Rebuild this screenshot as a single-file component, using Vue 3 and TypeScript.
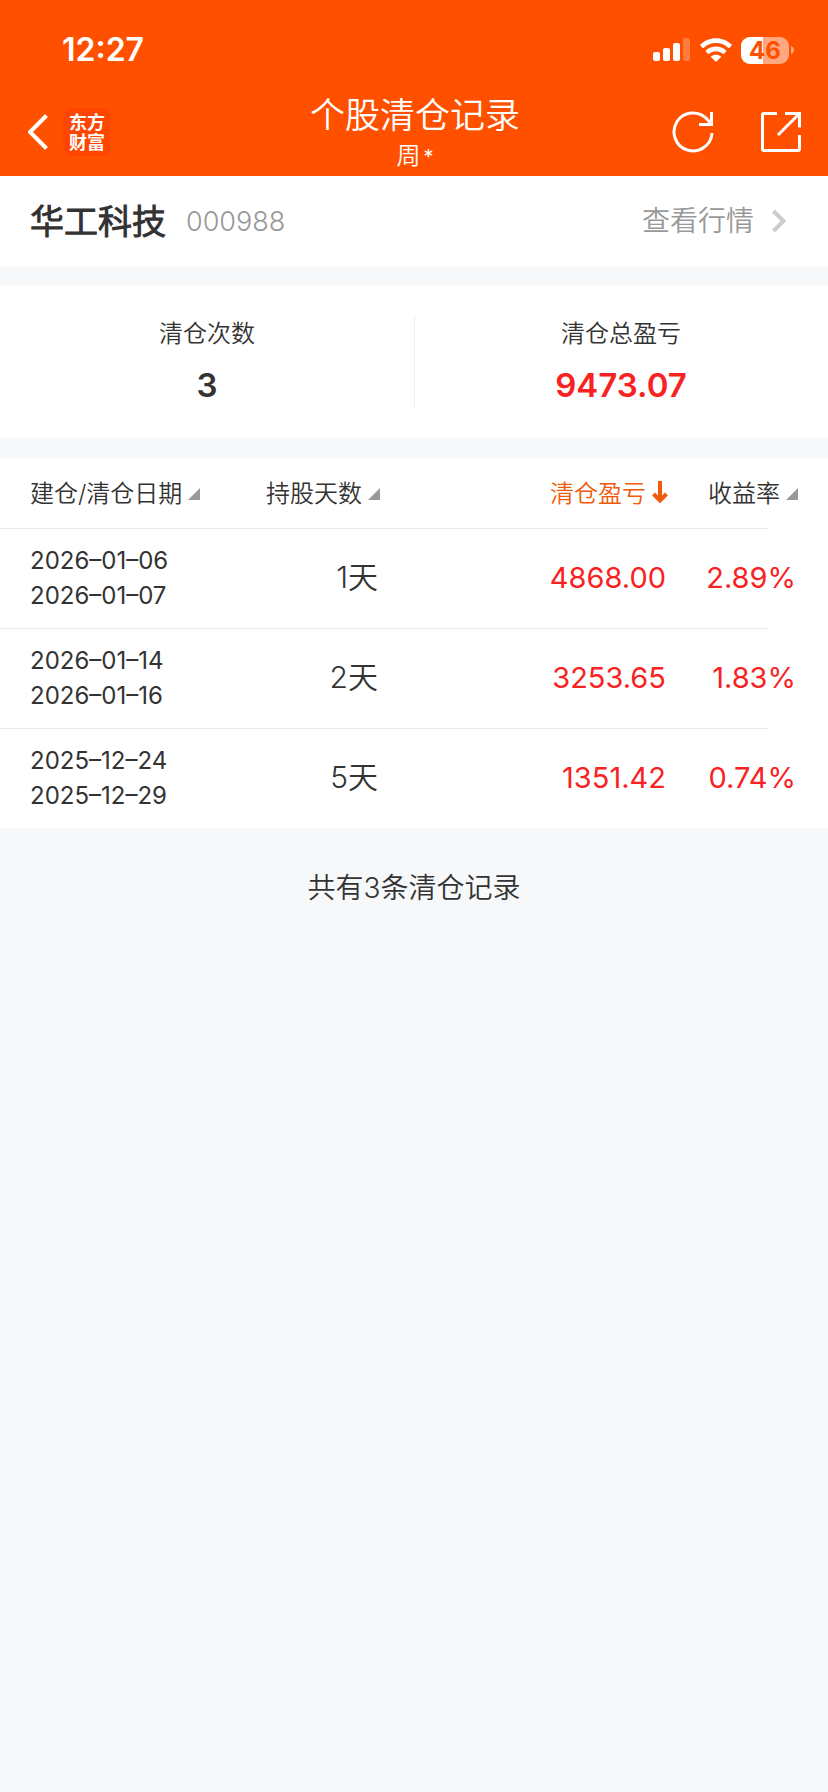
<script setup lang="ts">
interface ClearRecord {
  opened: string
  closed: string
  days: number
  profit: string
  rate: string
}

interface Column {
  key: string
  label: string
  active?: boolean
}

const battery = 46

const columns: Column[] = [
  { key: 'date', label: '建仓/清仓日期' },
  { key: 'days', label: '持股天数' },
  { key: 'profit', label: '清仓盈亏', active: true },
  { key: 'rate', label: '收益率' },
]

const records: ClearRecord[] = [
  { opened: '2026–01–06', closed: '2026–01–07', days: 1, profit: '4868.00', rate: '2.89%' },
  { opened: '2026–01–14', closed: '2026–01–16', days: 2, profit: '3253.65', rate: '1.83%' },
  { opened: '2025–12–24', closed: '2025–12–29', days: 5, profit: '1351.42', rate: '0.74%' },
]
</script>

<template>
  <div class="page">
    <header class="top">
      <div class="status">
        <span class="time">12:27</span>
        <div class="indicators">
          <svg class="signal" viewBox="0 0 38 24" aria-hidden="true">
            <rect x="0" y="14" width="7" height="9" rx="2" />
            <rect x="10" y="10" width="7" height="13" rx="2" />
            <rect x="20" y="5" width="7" height="18" rx="2" />
            <rect x="30" y="0" width="7" height="23" rx="2" opacity="0.25" />
          </svg>
          <svg class="wifi" viewBox="0 0 32 24" aria-hidden="true">
            <path d="M16 0.3C22.2 0.3 27.6 2.700 31.600 6.600Q32 7.100 31.600 7.600L29.300 9.900Q28.800 10.300 28.300 9.900C25 6.800 20.800 5 16 5S7 6.800 3.700 9.900Q3.200 10.300 2.700 9.900L0.400 7.600Q0 7.100 0.400 6.600C4.400 2.700 9.800 0.300 16 0.300Z" />
            <path d="M16 8.500C20 8.500 23.500 10 26.200 12.400Q26.700 12.900 26.200 13.400L23.900 15.700Q23.400 16.100 22.900 15.700C21 14.100 18.600 13.200 16 13.200S11 14.100 9.100 15.700Q8.600 16.100 8.100 15.700L5.800 13.400Q5.300 12.900 5.800 12.400C8.500 10 12 8.500 16 8.500Z" />
            <path d="M16 16.700C17.900 16.700 19.500 17.300 20.800 18.300Q21.300 18.800 20.800 19.300L16.500 23.600Q16 24 15.500 23.600L11.200 19.300Q10.700 18.800 11.200 18.300C12.500 17.300 14.100 16.700 16 16.700Z" />
          </svg>
          <div class="battery">
            <div class="cell">
              <div class="charge" :style="{ width: battery + '%' }"></div>
              <span class="level">{{ battery }}</span>
            </div>
            <svg class="cap" viewBox="0 0 3 8" aria-hidden="true"><path d="M0 0Q3 1 3 4T0 8Z" /></svg>
          </div>
        </div>
      </div>

      <div class="nav">
        <div class="side">
          <button class="icon-btn" type="button" aria-label="返回">
            <svg class="back" viewBox="0 0 20 36" aria-hidden="true"><path d="M18.500 1.500L2 18L18.500 34.500" /></svg>
          </button>
          <a class="brand" href="#">东方财富</a>
        </div>
        <div class="heading">
          <h1>个股清仓记录</h1>
          <p>周<span class="mask">*</span></p>
        </div>
        <div class="side actions">
          <button class="icon-btn" type="button" aria-label="刷新">
            <svg class="tool" viewBox="0 0 42 42" aria-hidden="true">
              <path d="M40 22A19 19 0 1 1 34.500 7.500L39 12.500" />
              <path d="M39.500 1V13.500H27" />
            </svg>
          </button>
          <button class="icon-btn" type="button" aria-label="分享">
            <svg class="tool" viewBox="0 0 42 42" aria-hidden="true">
              <path d="M17 2.500H4Q2.500 2.500 2.500 4V38Q2.500 39.500 4 39.500H38Q39.500 39.500 39.500 38V24" />
              <path d="M25 2.500H39.500V16.500M39.500 2.500L18 24" />
            </svg>
          </button>
        </div>
      </div>
    </header>

    <main>
      <section class="stock">
        <h2>华工科技</h2>
        <span class="code">000988</span>
        <a class="quote" href="#">
          查看行情
          <svg viewBox="0 0 14 24" aria-hidden="true"><path d="M1.500 2L11.500 12L1.500 22" /></svg>
        </a>
      </section>

      <section class="summary">
        <div class="stat">
          <span class="caption">清仓次数</span>
          <strong>3</strong>
        </div>
        <div class="stat gain">
          <span class="caption">清仓总盈亏</span>
          <strong>9473.07</strong>
        </div>
      </section>

      <table class="records">
        <colgroup>
          <col class="c-date" />
          <col class="c-days" />
          <col />
          <col class="c-rate" />
        </colgroup>
        <thead>
          <tr>
            <th v-for="col in columns" :key="col.key" scope="col">
              <button class="sort" :class="{ active: col.active }" type="button">
                {{ col.label }}
                <svg v-if="col.active" class="arrow" viewBox="0 0 16 22" aria-hidden="true">
                  <path d="M8 0V19M1.500 13L8 19.500L14.500 13" />
                </svg>
                <svg v-else class="corner" viewBox="0 0 12 12" aria-hidden="true"><path d="M12 0V12H0Z" /></svg>
              </button>
            </th>
          </tr>
        </thead>
        <tbody>
          <tr v-for="r in records" :key="r.opened">
            <td class="dates"><div>{{ r.opened }}</div><div>{{ r.closed }}</div></td>
            <td>{{ r.days }}天</td>
            <td class="red">{{ r.profit }}</td>
            <td class="red">{{ r.rate }}</td>
          </tr>
        </tbody>
      </table>

      <p class="total">共有{{ records.length }}条清仓记录</p>
    </main>
  </div>
</template>

<style>
body {
  margin: 0;
  background: #f7f8fa;
}
</style>

<style scoped>
.page {
  min-height: 100vh;
  background: #f7f8fa;
  color: #333;
  font-family: Inter, "Noto Sans CJK SC DemiLight", "Noto Sans CJK SC", sans-serif;
  font-weight: 350;
}
h1, h2, p {
  margin: 0;
  font-weight: inherit;
}
button {
  margin: 0;
  padding: 0;
  border: 0;
  background: none;
  color: inherit;
  font: inherit;
}
a {
  color: inherit;
  text-decoration: none;
}
svg {
  display: block;
  flex: none;
}
.top {
  background: #ff5000;
  color: #fff;
}
.status {
  display: flex;
  justify-content: space-between;
  align-items: center;
  height: 88px;
  padding: 12px 34px 0 62px;
  box-sizing: border-box;
}
.time {
  font-size: 32px;
  font-weight: 600;
  line-height: 36px;
}
.indicators {
  display: flex;
  align-items: center;
  gap: 9px;
}
.indicators svg {
  fill: #fff;
}
.signal {
  width: 38px;
  height: 24px;
}
.wifi {
  width: 32px;
  height: 24px;
}
.battery {
  display: flex;
  align-items: center;
  gap: 2px;
}
.cell {
  position: relative;
  width: 48px;
  height: 27px;
  overflow: hidden;
  border-radius: 9px;
  background: rgba(255, 255, 255, 0.5);
}
.charge {
  height: 100%;
  background: #fff;
}
.level {
  position: absolute;
  inset: 0;
  color: #ff5000;
  font-size: 24px;
  font-weight: 700;
  line-height: 27px;
  text-align: center;
}
.cap {
  width: 3px;
  height: 8px;
  opacity: 0.5;
}
.nav {
  display: grid;
  grid-template-columns: 1fr auto 1fr;
  align-items: center;
  height: 88px;
  padding: 0 26px 0 28px;
}
.side {
  display: flex;
  align-items: center;
  gap: 15px;
}
.actions {
  justify-content: flex-end;
  gap: 46px;
}
.icon-btn svg {
  fill: none;
  stroke: #fff;
  stroke-width: 3;
}
.icon-btn .back {
  width: 20px;
  height: 36px;
  stroke-width: 4;
}
.tool {
  width: 42px;
  height: 42px;
}
.brand {
  width: 48px;
  height: 48px;
  padding: 3px 6px;
  box-sizing: border-box;
  border-radius: 10px;
  background: #ff4600;
  font-family: "Noto Sans CJK SC", sans-serif;
  font-size: 18px;
  font-weight: 700;
  line-height: 20px;
  text-align: center;
  word-break: break-all;
}
.heading {
  text-align: center;
}
.heading h1 {
  font-size: 35px;
  line-height: 48px;
}
.heading p {
  font-size: 24px;
  line-height: 34px;
}
.mask {
  padding-left: 3px;
  font-size: 20px;
  font-weight: 400;
}
.stock {
  display: flex;
  align-items: center;
  height: 90px;
  padding: 0 42px 0 30px;
  background: #fff;
}
.stock h2 {
  padding-bottom: 4px;
  font-size: 34px;
  font-weight: 700;
}
.code {
  margin-left: 20px;
  color: #999;
  font-size: 27px;
}
.quote {
  display: flex;
  align-items: center;
  gap: 18px;
  margin-left: auto;
  color: #999;
  font-size: 28px;
  line-height: 36px;
}
.quote svg {
  width: 14px;
  height: 24px;
  fill: none;
  stroke: #ccc;
  stroke-width: 4;
}
.summary {
  display: flex;
  margin: 20px 0;
  padding: 30px 0;
  background: #fff;
}
.stat {
  display: flex;
  flex: 1;
  flex-direction: column;
  align-items: center;
  gap: 13px;
  height: 92px;
}
.stat + .stat {
  box-shadow: inset 1px 0 #eee;
}
.caption {
  font-size: 24px;
  line-height: 36px;
}
.stat strong {
  font-size: 33px;
  font-weight: 600;
  line-height: 40px;
}
.gain strong,
.red {
  color: #f82222;
}
.records {
  width: 100%;
  border-collapse: collapse;
  table-layout: fixed;
  background: #fff;
}
.c-date {
  width: 220px;
}
.c-days {
  width: 160px;
}
.c-rate {
  width: 160px;
}
th {
  height: 66px;
  padding: 0 0 4px;
  font-size: 24px;
  font-weight: inherit;
  text-align: right;
}
th:first-child,
td:first-child {
  padding-left: 30px;
  text-align: left;
}
th:last-child {
  padding-right: 30px;
}
.sort {
  display: inline-flex;
  align-items: center;
  gap: 6px;
  white-space: nowrap;
}
.sort.active {
  color: #f05a0a;
}
.corner {
  width: 12px;
  height: 12px;
  margin-top: 6px;
  fill: #999;
}
.arrow {
  width: 16px;
  height: 22px;
  margin-top: 2px;
  fill: none;
  stroke: #f05a0a;
  stroke-width: 4;
}
tbody tr {
  background: linear-gradient(#e9e9e9, #e9e9e9) left top / calc(100% - 60px) 1px no-repeat;
}
td {
  height: 94px;
  padding: 0 2px 6px 0;
  font-size: 30px;
  text-align: right;
}
td.red {
  height: 98px;
  padding-bottom: 2px;
  font-size: 29px;
  font-weight: 400;
}
td:last-child {
  padding-right: 32px;
}
td.dates {
  height: 100px;
  padding-bottom: 0;
  font-size: 24px;
  font-weight: 400;
  line-height: 35px;
}
.total {
  padding-top: 40px;
  font-size: 28px;
  line-height: 40px;
  text-align: center;
}
</style>
